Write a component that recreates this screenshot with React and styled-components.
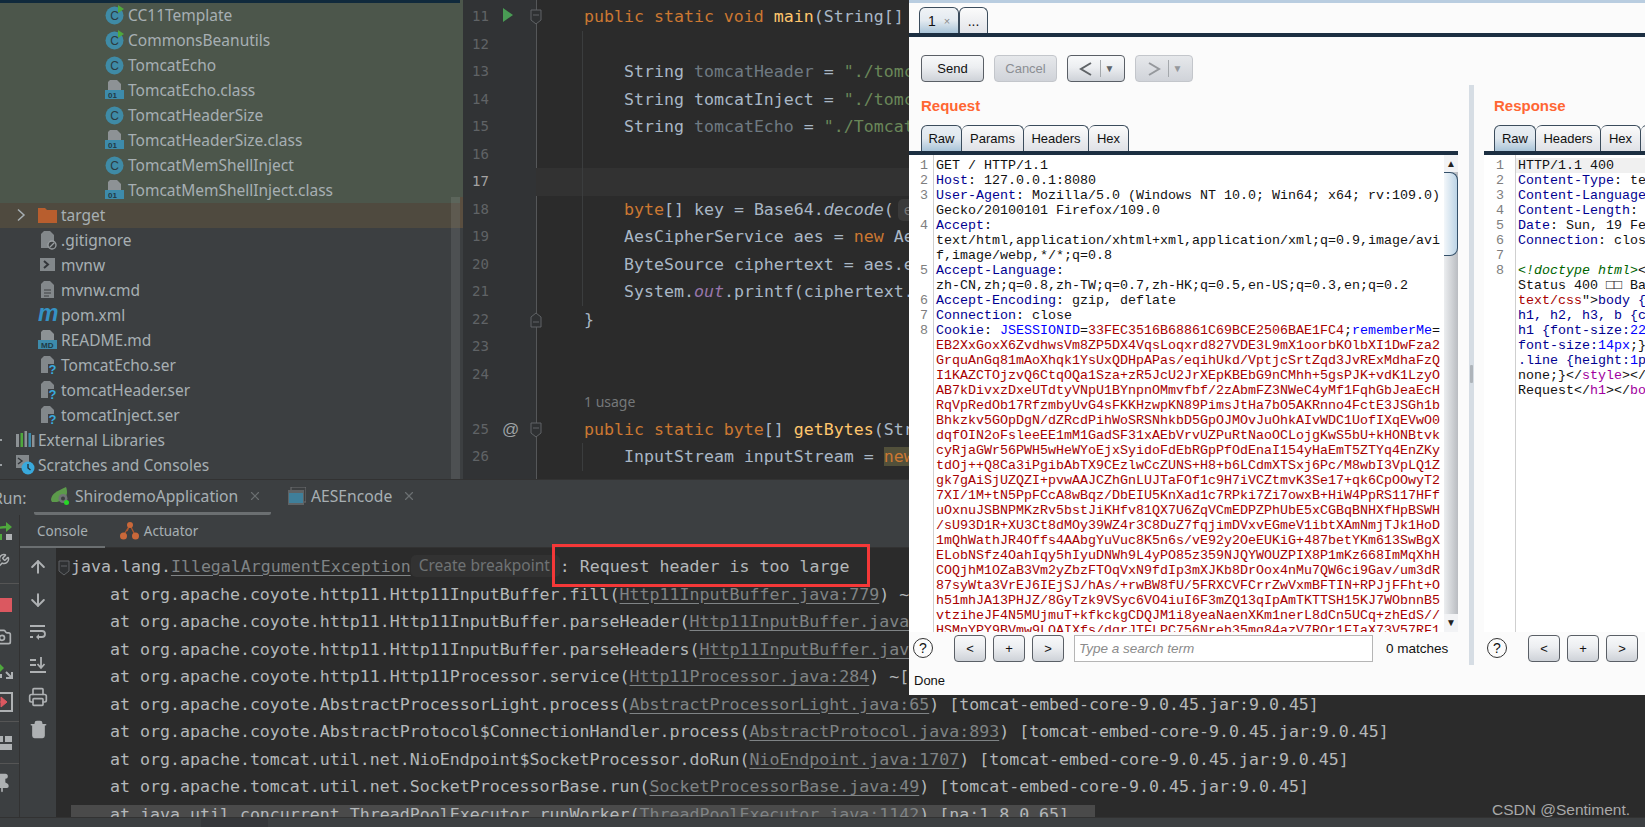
import React from 'react';
import styled, { createGlobalStyle } from 'styled-components';
import { ArrowUp, ArrowDown, Wrench, Camera, Pin, Printer, Trash2, X } from 'lucide-react';

const GlobalStyle = createGlobalStyle`
  html, body { margin: 0; padding: 0; background: #3c3f41; overflow: hidden; }
  * { box-sizing: border-box; }
`;

const Page = styled.div`
  position: relative;
  width: 1645px;
  height: 827px;
  overflow: hidden;
  display: flex;
  flex-direction: column;
  font-family: 'Noto Sans', sans-serif;
`;

const TopArea = styled.div`
  display: flex;
  height: 479px;
  flex: none;
`;

/* ---------- project tree ---------- */

const TreePanel = styled.div`
  position: relative;
  width: 460px;
  flex: none;
  background: #3c3f41;
  border-top: 3px solid #10293c;
  overflow: hidden;
`;

const TreeRow = styled.div`
  display: flex;
  align-items: center;
  height: 25px;
  padding-left: ${(p) => p.$pad}px;
  padding-bottom: 2px;
  background: ${(p) => (p.$tone === 'green' ? '#4c564b' : p.$tone === 'orange' ? '#4f4a3f' : 'transparent')};
  color: #a7afb3;
  font-size: 15.5px;
  white-space: nowrap;
`;

const IconBox = styled.span`
  display: inline-flex;
  width: 20px;
  height: 20px;
  flex: none;
  margin-right: 3px;
`;

const Chevron = styled.span`
  display: inline-flex;
  width: ${(p) => p.$w}px;
  flex: none;
`;

const TreeDot = styled.span`
  width: 2px;
  height: 2px;
  background: #9a9fa2;
  margin-right: 13px;
`;

const TreeScroll = styled.div`
  position: absolute;
  left: 451px;
  top: 194px;
  bottom: 0;
  width: 9px;
  background: rgba(255, 255, 255, 0.09);
`;

const Stripe = styled.div`
  width: 3px;
  flex: none;
  background: linear-gradient(#4c564b 0 197px, #5a4e3f 197px 228px, #3c3f41 228px);
`;

/* ---------- code editor ---------- */

const Editor = styled.div`
  flex: 1;
  min-width: 0;
  padding-top: 3px;
  overflow: hidden;
  background: linear-gradient(90deg, #313335 73px, #555759 73px 74px, #2b2b2b 74px);
`;

const CodeRow = styled.div`
  position: relative;
  display: flex;
  height: 27.5px;
  line-height: 27.5px;
  background: ${(p) => (p.$current ? 'linear-gradient(90deg, #313335 73px, #323232 73px)' : 'none')};
  font-family: 'DejaVu Sans Mono', monospace;
  font-size: 16.6px;
  color: #a9b7c6;
  white-space: pre;
`;

const LineNo = styled.span`
  position: relative;
  width: 74px;
  flex: none;
  padding-left: 9px;
  font-size: 14px;
  color: ${(p) => (p.$current ? '#a4a3a3' : '#606366')};
`;

const GutterMark = styled.span`
  position: absolute;
  left: 39px;
  top: 4px;
  display: inline-flex;
  color: #9fa3a6;
  font-family: 'Liberation Sans', sans-serif;
  font-size: 17px;
  line-height: 20px;
`;

const FoldMark = styled.svg`
  position: absolute;
  left: 67px;
  top: 6px;
`;

const CodeText = styled.span`
  position: relative;
  padding-left: ${(p) => 47 + p.$indent * 40}px;
  ${(p) =>
    p.$guide &&
    `&::before { content: ''; position: absolute; left: 45px; top: 0; bottom: 0; width: 1px; background: #3b3d3e; }`}
`;

const UsageText = styled.span`
  padding-left: 47px;
  font-family: 'Noto Sans', sans-serif;
  font-size: 14px;
  color: #75787a;
`;

const kindColor = {
  kw: '#cc7832',
  fn: '#ffc66d',
  dim: '#6f7a82',
  str: '#6a8759',
  field: '#9876aa',
};

const Tok = styled.span`
  color: ${(p) => kindColor[p.$k] || 'inherit'};
  font-style: ${(p) => (p.$i ? 'italic' : 'normal')};
  background: ${(p) => (p.$bg ? '#52503a' : 'none')};
`;

const Inlay = styled.span`
  display: inline-block;
  margin-left: 4px;
  padding: 0 6px;
  height: 22px;
  line-height: 22px;
  border-radius: 5px;
  background: #3a3a3a;
  color: #787878;
  font-size: 14px;
`;

/* ---------- run panel ---------- */

const RunPanel = styled.div`
  flex: 1;
  display: flex;
  flex-direction: column;
  min-height: 0;
  border-top: 1px solid #323232;
  background: #3c3f41;
`;

const RunTabs = styled.div`
  display: flex;
  align-items: center;
  height: 35px;
  flex: none;
  color: #a7afb3;
  font-size: 15.7px;
  white-space: nowrap;
`;

const RunLabel = styled.span`
  width: 34px;
  margin-left: -7px;
  margin-right: 7px;
  flex: none;
`;

const RunTab = styled.div`
  display: flex;
  align-items: center;
  height: 35px;
  padding-left: ${(p) => p.$pad}px;
  width: ${(p) => p.$w}px;
  flex: none;
  gap: 5px;
  border-bottom: 3px solid ${(p) => (p.$active ? '#6b6f71' : 'transparent')};
  border-radius: 0 0 2px 2px;
`;

const CloseX = styled(X)`
  margin-left: 5px;
  color: #6b6f71;
`;

const RunBody = styled.div`
  flex: 1;
  display: flex;
  min-height: 0;
`;

const SideStrip = styled.div`
  width: 20px;
  flex: none;
  border-right: 1px solid #323232;
  color: #aeb1b3;
  overflow: hidden;
`;

const StripSlot = styled.div`
  display: flex;
  align-items: center;
  height: ${(p) => p.$h}px;
  padding: ${(p) => p.$pt || 0}px 0 ${(p) => p.$pb || 0}px;
  margin-left: -8px;
  border-bottom: ${(p) => (p.$sep ? '1px solid #555' : 'none')};
`;

const ConsoleColumn = styled.div`
  flex: 1;
  min-width: 0;
  display: flex;
  flex-direction: column;
`;

const SubTabs = styled.div`
  display: flex;
  height: 33px;
  flex: none;
  border-bottom: 1px solid #323232;
  color: #a7afb3;
  font-size: 13.5px;
`;

const SubTab = styled.div`
  display: flex;
  align-items: center;
  gap: 5px;
  padding: 0 17px 0 ${(p) => p.$pl}px;
  height: 33px;
  border-bottom: 2px solid ${(p) => (p.$active ? '#6b6f71' : 'transparent')};
`;

const ConsoleArea = styled.div`
  flex: 1;
  display: flex;
  min-height: 0;
`;

const ToolColumn = styled.div`
  width: 36px;
  flex: none;
  padding-top: 3px;
  display: flex;
  flex-direction: column;
  align-items: center;
  color: #aeb1b3;
`;

const ToolSlot = styled.div`
  height: 32.5px;
  display: flex;
  align-items: center;
  justify-content: center;
`;

const ConsoleText = styled.div`
  position: relative;
  flex: 1;
  min-width: 0;
  padding-top: 5px;
  background: #2b2b2b;
  overflow: hidden;
  font-family: 'DejaVu Sans Mono', monospace;
  font-size: 16.6px;
  color: #b4b8ba;
  white-space: pre;
`;

const ConsoleLine = styled.div`
  height: 27.5px;
  line-height: 27.5px;
  margin-left: 15px;
  padding-left: ${(p) => (p.$first ? 0 : 39)}px;
  width: ${(p) => (p.$hl ? '1024px' : 'auto')};
  background: ${(p) => (p.$hl ? 'linear-gradient(transparent 4.5px, #4a4a4a 4.5px)' : 'none')};
`;

const FoldInline = styled.svg`
  position: absolute;
  left: 2px;
  top: 12px;
`;

const LinkText = styled.span`
  color: #7f8385;
  text-decoration: underline;
  text-underline-offset: 3px;
`;

const Hint = styled.span`
  display: inline-flex;
  align-items: center;
  vertical-align: top;
  width: 149px;
  height: 22px;
  margin-top: 2px;
  padding-left: 8px;
  border-radius: 5px;
  background: #323232;
  font-family: 'Noto Sans', sans-serif;
  font-size: 15.5px;
  color: #6f7274;
  white-space: nowrap;
`;

const BottomBar = styled.div`
  display: flex;
  height: 10px;
  flex: none;
  padding-left: 201px;
  background: #3c3f41;
  border-top: 1px solid #323232;
`;

const BottomTab = styled.div`
  width: 67px;
  background: #35373a;
`;

const RedBox = styled.div`
  position: absolute;
  left: 552px;
  top: 544px;
  width: 318px;
  height: 43px;
  border: 3px solid #f53838;
`;

const Watermark = styled.div`
  position: absolute;
  left: 1492px;
  top: 801px;
  font-family: 'Liberation Sans', sans-serif;
  font-size: 15.5px;
  color: #a8a8a8;
`;

/* ---------- burp window ---------- */

const BurpWindow = styled.div`
  position: absolute;
  left: 909px;
  top: 0;
  width: 736px;
  height: 695px;
  display: flex;
  flex-direction: column;
  overflow: hidden;
  background: #fbfbfb;
  border-top: 3px solid #b9cde0;
  font-family: 'Liberation Sans', sans-serif;
  color: #111;
`;

const MainTabs = styled.div`
  display: flex;
  height: 34px;
  flex: none;
  padding: 4px 0 0 10px;
  border-bottom: 4px solid #1c2f42;
`;

const MainTab = styled.div`
  display: flex;
  align-items: center;
  justify-content: center;
  gap: 8px;
  width: ${(p) => p.$w}px;
  height: 26px;
  border: 1px solid #3b4c5c;
  border-bottom: none;
  border-radius: 6px 6px 0 0;
  background: ${(p) =>
    p.$active ? 'linear-gradient(#f0f3f6, #e3eaf0 50%, #a9c4d8)' : 'linear-gradient(#fbfbfb, #e2e4e9)'};
  font-size: 14px;
`;

const TabClose = styled.span`
  color: #8a8a8a;
  font-size: 11px;
`;

const Toolbar = styled.div`
  display: flex;
  gap: 10px;
  flex: none;
  height: 27px;
  margin-top: 18px;
  padding-left: 12px;
`;

const PushButton = styled.button`
  display: inline-flex;
  align-items: center;
  justify-content: center;
  width: ${(p) => p.$w}px;
  height: 27px;
  padding: 0;
  border: 1px solid ${(p) => (p.$off ? '#c3c6cb' : '#5a5f66')};
  border-radius: 4px;
  background: ${(p) =>
    p.$off ? 'linear-gradient(#e6e8eb, #d0d3d9)' : 'linear-gradient(#f8f9fa, #eceef1 45%, #ced2d8)'};
  color: ${(p) => (p.$off ? '#8b8e93' : '#111')};
  font-family: 'Liberation Sans', sans-serif;
  font-size: 13px;
`;

const NavArrow = styled.svg`
  color: ${(p) => (p.$off ? '#95989c' : '#5f6367')};
`;

const NavDivider = styled.span`
  width: 1px;
  height: 17px;
  margin: 0 4px 0 6px;
  background: #a4a8ac;
`;

const NavCaret = styled.span`
  font-size: 10px;
  color: ${(p) => (p.$off ? '#95989c' : '#5f6367')};
`;

const Panes = styled.div`
  display: flex;
  height: 580px;
  flex: none;
  margin-top: 3px;
`;

const Pane = styled.div`
  display: flex;
  flex-direction: column;
  width: ${(p) => p.$w}px;
  flex: none;
  margin-left: ${(p) => p.$ml}px;
`;

const PaneTitle = styled.div`
  height: 40px;
  flex: none;
  padding: 12px 0 0 ${(p) => p.$pad}px;
  font-size: 15px;
  line-height: 18px;
  font-weight: bold;
  color: #ff6633;
`;

const PaneTabs = styled.div`
  display: flex;
  height: 30px;
  flex: none;
  padding-left: ${(p) => p.$pad}px;
  border-bottom: 4px solid #1c2f42;
  overflow: hidden;
`;

const PaneTab = styled.div`
  display: flex;
  align-items: center;
  justify-content: center;
  width: ${(p) => p.$w}px;
  flex: none;
  height: 26px;
  border: 1px solid #3b4c5c;
  border-bottom: none;
  border-left-width: ${(p) => (p.$first ? 1 : 0)}px;
  border-radius: 6px 6px 0 0;
  background: ${(p) =>
    p.$active ? 'linear-gradient(#e8eef3, #dfe7ee 50%, #a9c4d8)' : 'linear-gradient(#fbfbfb, #dfe1e6)'};
  font-size: 13px;
`;

const TextBox = styled.div`
  flex: 1;
  display: flex;
  min-height: 0;
  background: #fff;
  overflow: hidden;
`;

const NumberColumn = styled.div`
  width: ${(p) => p.$w}px;
  flex: none;
  padding: 3px ${(p) => p.$pr}px 0 0;
  border-right: 1px solid #cfcfcf;
  text-align: right;
  font-family: 'Liberation Mono', monospace;
  font-size: 13.33px;
  line-height: 15px;
  color: #7e7e7e;
`;

const HttpText = styled.div`
  flex: 1;
  min-width: 0;
  padding-top: 3px;
  overflow: hidden;
  font-family: 'Liberation Mono', monospace;
  font-size: 13.33px;
  line-height: 15px;
  color: #111;
  white-space: pre;
`;

const HttpLine = styled.div`
  height: 15px;
  padding-left: 2px;
  background: ${(p) => (p.$hl ? '#f0f0f0' : 'none')};
`;

const httpColor = {
  name: '#000090',
  cookie: '#0000ff',
  val: '#a80000',
  doc: '#006400',
  tag: '#a000a0',
  attr: '#000090',
};

const Http = styled.span`
  color: ${(p) => httpColor[p.$k] || 'inherit'};
  font-style: ${(p) => (p.$k === 'doc' ? 'italic' : 'normal')};
`;

const ScrollBar = styled.div`
  width: 14px;
  flex: none;
  display: flex;
  flex-direction: column;
  align-items: center;
  background: linear-gradient(90deg, #eceef0, #b9bcc1);
`;

const ScrollArrow = styled.div`
  height: ${(p) => p.$h}px;
  width: 14px;
  flex: none;
  text-align: center;
  font-size: 10px;
  line-height: ${(p) => p.$h}px;
  color: #222;
  background: #f2f3f5;
`;

const ScrollThumb = styled.div`
  width: 14px;
  height: 84px;
  flex: none;
  margin-bottom: auto;
  border: 1px solid #34506a;
  border-left: none;
  border-radius: 0 8px 8px 0;
  background: linear-gradient(90deg, #f3f7fa, #bcd4e6);
`;

const SearchBar = styled.div`
  display: flex;
  align-items: flex-start;
  height: 33px;
  flex: none;
  padding-top: 3px;
  background: #fbfbfb;
  color: #111;
  font-size: 13px;
`;

const HelpCircle = styled.div`
  display: flex;
  align-items: center;
  justify-content: center;
  width: 20px;
  height: 20px;
  margin: 3px 21px 0 ${(p) => p.$ml}px;
  border: 1.5px solid #333;
  border-radius: 50%;
  font-size: 14px;
`;

const SearchButtons = styled.div`
  display: flex;
  gap: 7px;
`;

const SearchInput = styled.div`
  width: 299px;
  height: 27px;
  margin-left: 10px;
  padding-left: 4px;
  border: 1px solid #b5b5b5;
  background: #fff;
  line-height: 25px;
  font-size: 13.5px;
  font-style: italic;
  color: #8b8b8b;
`;

const Matches = styled.div`
  margin-left: 13px;
  line-height: 27px;
  font-size: 13.5px;
`;

const Splitter = styled.div`
  position: relative;
  width: 5px;
  flex: none;
  margin-left: 11px;
  background: #d6dde4;
  &::after {
    content: '';
    position: absolute;
    left: 1px;
    top: 280px;
    width: 3px;
    height: 18px;
    background: #aeb4ba;
    border-radius: 1px;
  }
`;

const StatusLine = styled.div`
  flex: 1;
  padding: 8px 0 0 5px;
  font-size: 13px;
  color: #111;
`;

/* ---------- icons ---------- */

const fileShape = 'M5 0h7l4 4v6H3V2z';

const ClassIcon = ({ run }) => (
  <svg width="20" height="20" viewBox="0 0 20 20">
    <circle cx="9.5" cy="10.5" r="9" fill="#3f8ba6" />
    <text x="9.5" y="15" textAnchor="middle" fontSize="12" fontFamily="Liberation Sans" fill="#2c3a40">
      C
    </text>
    {run && <path d="M13 0l6 4-6 4z" fill="#4fa83d" />}
  </svg>
);

const BandFileIcon = ({ label }) => (
  <svg width="20" height="20" viewBox="0 0 20 20">
    <path d={fileShape} fill="#8d9295" />
    <rect x="0" y="10" width="19" height="9" fill="#3d8bab" />
    <text x="3" y="18" fontSize="8" fontWeight="bold" fontFamily="Liberation Sans" fill="#1f3a46">
      {label}
    </text>
  </svg>
);

const GrayFile = () => <path d="M6 1h6l4 4v13H3V4z" fill="#83888b" />;

const GitIgnoreIcon = () => (
  <svg width="20" height="20" viewBox="0 0 20 20">
    <GrayFile />
    <circle cx="14" cy="15" r="4" fill="#3c3f41" stroke="#9a9fa2" strokeWidth="1.3" />
    <path d="M11.5 17.5l5-5" stroke="#9a9fa2" strokeWidth="1.3" />
  </svg>
);

const ShellIcon = () => (
  <svg width="20" height="20" viewBox="0 0 20 20">
    <rect x="2" y="3" width="15" height="13" fill="#83888b" />
    <path d="M6 6l4 3.5L6 13" fill="none" stroke="#33363a" strokeWidth="2" />
  </svg>
);

const TextFileIcon = () => (
  <svg width="20" height="20" viewBox="0 0 20 20">
    <GrayFile />
    <path d="M6 10h7M6 13h7M6 16h5" stroke="#3c3f41" strokeWidth="1" />
  </svg>
);

const MavenIcon = () => (
  <svg width="20" height="20" viewBox="0 0 20 20">
    <text x="0" y="16" fontSize="23" fontWeight="bold" fontStyle="italic" fontFamily="Liberation Sans" fill="#3592c4">
      m
    </text>
  </svg>
);

const UnknownIcon = () => (
  <svg width="20" height="20" viewBox="0 0 20 20">
    <GrayFile />
    <path d="M10 9h8v11h-8z" fill="#3c3f41" />
    <text x="14.5" y="19" textAnchor="middle" fontSize="13" fontWeight="bold" fontFamily="Liberation Sans" fill="#39a9dc">
      ?
    </text>
  </svg>
);

const LibrariesIcon = () => (
  <svg width="20" height="20" viewBox="0 0 20 20">
    <rect x="1" y="4" width="3" height="13" fill="#8d9295" />
    <rect x="5.5" y="3" width="2.5" height="14" fill="#4fa83d" />
    <rect x="9.5" y="1" width="2.5" height="16" fill="#8d9295" />
    <rect x="13.5" y="3" width="2.5" height="14" fill="#3d8bab" />
    <rect x="17" y="5" width="2.5" height="12" fill="#8d9295" />
  </svg>
);

const ScratchIcon = () => (
  <svg width="20" height="20" viewBox="0 0 20 20">
    <rect x="1" y="0" width="13" height="13" fill="#83888b" />
    <path d="M3 3l4 3-4 3" fill="none" stroke="#33363a" strokeWidth="1.4" />
    <circle cx="13" cy="13" r="6.5" fill="#39a9dc" />
    <path d="M13 9v4l2.5 2" fill="none" stroke="#24323a" strokeWidth="1.4" />
  </svg>
);

const FolderIcon = () => (
  <svg width="20" height="20" viewBox="0 0 20 20">
    <path d="M0 3h7l2 2h10v13H0z" fill="#b85e2e" />
  </svg>
);

const ChevronIcon = () => (
  <svg width="12" height="14" viewBox="0 0 12 14">
    <path d="M3 1.5L9 7l-6 5.5" fill="none" stroke="#a7afb3" strokeWidth="1.5" />
  </svg>
);

const SpringIcon = () => (
  <svg width="20" height="20" viewBox="0 0 20 20">
    <path d="M1 14C1 8 7 5 16 1c2 5 1 10-3 13l-6 2H2z" fill="#5c9a4b" />
    <circle cx="13" cy="12.500" r="4.500" fill="#6f7375" />
    <circle cx="13" cy="12.500" r="2" fill="#3c3f41" />
    <circle cx="16.500" cy="16.500" r="2.500" fill="#27d627" />
  </svg>
);

const WindowIcon = () => (
  <svg width="18" height="18" viewBox="0 0 18 18">
    <rect x="3" y="0" width="15" height="15" fill="none" stroke="#6e7173" />
    <rect x="0" y="3" width="16" height="15" fill="#5f6365" />
    <rect x="1" y="6" width="14" height="10" fill="#3f7f9a" />
  </svg>
);

const ActuatorIcon = () => (
  <svg width="19" height="19" viewBox="0 0 19 19">
    <path d="M3 15l7-11 5.500 11M10 4l-3 6" fill="none" stroke="#b0562c" strokeWidth="1.3" />
    <circle cx="10" cy="4" r="3" fill="#c9683a" />
    <circle cx="3.500" cy="15" r="3.500" fill="#c9683a" />
    <circle cx="15.500" cy="15" r="3.500" fill="#c9683a" />
  </svg>
);

const RerunIcon = () => (
  <svg width="24" height="20" viewBox="0 0 24 20">
    <path d="M3 8c3-3 8-3 12-3" fill="none" stroke="#4fa83d" strokeWidth="2.400" />
    <path d="M14 0l6 5-6 5z" fill="#4fa83d" />
    <rect x="14" y="12" width="6" height="6" fill="#aeb1b3" />
    <rect x="4" y="12" width="6" height="6" fill="#4fa83d" />
  </svg>
);

const StopIcon = () => (
  <svg width="24" height="16" viewBox="0 0 24 16">
    <rect x="4" y="1" width="16" height="14" fill="#db5860" />
  </svg>
);

const RestoreIcon = () => (
  <svg width="24" height="20" viewBox="0 0 24 20">
    <path d="M6 2l6 6-6 6z" fill="#4fa83d" />
    <path d="M14 12l6 6M20 12v6h-6" fill="none" stroke="#aeb1b3" strokeWidth="2" />
    <rect x="4" y="14" width="6" height="4" fill="#aeb1b3" />
  </svg>
);

const DumpIcon = () => (
  <svg width="24" height="20" viewBox="0 0 24 20">
    <rect x="5" y="1" width="15" height="18" fill="none" stroke="#aeb1b3" strokeWidth="2" />
    <path d="M5 10h5M9 5l6 5-6 5z" fill="#db5860" stroke="#db5860" />
  </svg>
);

const LayoutIcon = () => (
  <svg width="24" height="16" viewBox="0 0 24 16">
    <path d="M4 1h7v6H4zM13 1h7v6h-7zM4 9h16v6H4z" fill="#aeb1b3" />
  </svg>
);

const WrapIcon = () => (
  <svg width="18" height="18" viewBox="0 0 18 18">
    <path d="M1 3h15M1 8h12a3 3 0 010 6H8M1 14h3" fill="none" stroke="#aeb1b3" strokeWidth="1.800" />
    <path d="M10 11l-3 3 3 3z" fill="#aeb1b3" />
  </svg>
);

const ScrollEndIcon = () => (
  <svg width="18" height="18" viewBox="0 0 18 18">
    <path d="M1 4h6M1 9h6M1 16h16M12 1v11M8.500 8l3.500 4 3.500-4" fill="none" stroke="#aeb1b3" strokeWidth="1.800" />
  </svg>
);

const FoldShape = ({ up, ...rest }) => (
  <svg width="12" height="16" viewBox="0 0 12 16" {...rest}>
    <path d={up ? 'M1 15V5l5-4 5 4v10z' : 'M1 1h10v10l-5 4-5-4z'} fill="#2f3133" stroke="#606366" />
    <path d={up ? 'M3 10h6' : 'M3 6h6'} stroke="#606366" />
  </svg>
);

/* ---------- data ---------- */

const treeRows = [
  { pad: 105, tone: 'green', icon: <ClassIcon run />, text: 'CC11Template' },
  { pad: 105, tone: 'green', icon: <ClassIcon run />, text: 'CommonsBeanutils' },
  { pad: 105, tone: 'green', icon: <ClassIcon />, text: 'TomcatEcho' },
  { pad: 105, tone: 'green', icon: <BandFileIcon label="01" />, text: 'TomcatEcho.class' },
  { pad: 105, tone: 'green', icon: <ClassIcon />, text: 'TomcatHeaderSize' },
  { pad: 105, tone: 'green', icon: <BandFileIcon label="01" />, text: 'TomcatHeaderSize.class' },
  { pad: 105, tone: 'green', icon: <ClassIcon />, text: 'TomcatMemShellInject' },
  { pad: 105, tone: 'green', icon: <BandFileIcon label="01" />, text: 'TomcatMemShellInject.class' },
  { pad: 15, tone: 'orange', arrow: true, icon: <FolderIcon />, text: 'target' },
  { pad: 38, icon: <GitIgnoreIcon />, text: '.gitignore' },
  { pad: 38, icon: <ShellIcon />, text: 'mvnw' },
  { pad: 38, icon: <TextFileIcon />, text: 'mvnw.cmd' },
  { pad: 38, icon: <MavenIcon />, text: 'pom.xml' },
  { pad: 38, icon: <BandFileIcon label="MD" />, text: 'README.md' },
  { pad: 38, icon: <UnknownIcon />, text: 'TomcatEcho.ser' },
  { pad: 38, icon: <UnknownIcon />, text: 'tomcatHeader.ser' },
  { pad: 38, icon: <UnknownIcon />, text: 'tomcatInject.ser' },
  { pad: 0, dot: true, icon: <LibrariesIcon />, text: 'External Libraries' },
  { pad: 0, dot: true, icon: <ScratchIcon />, text: 'Scratches and Consoles' },
];

// code is kept to what shows left of the Burp window
const codeRows = [
  { no: 11, mark: 'run', fold: 'down', indent: 0, toks: [['public static void ', 'kw'], ['main', 'fn'], ['(String[] ']] },
  { no: 12, indent: 0, guide: true, toks: [] },
  { no: 13, indent: 1, guide: true, toks: [['String '], ['tomcatHeader', 'dim'], [' = '], ['"./tomca', 'str']] },
  { no: 14, indent: 1, guide: true, toks: [['String tomcatInject = '], ['"./tomca', 'str']] },
  { no: 15, indent: 1, guide: true, toks: [['String '], ['tomcatEcho', 'dim'], [' = '], ['"./Tomcat', 'str']] },
  { no: 16, indent: 0, guide: true, toks: [] },
  { no: 17, indent: 0, guide: true, current: true, toks: [] },
  { no: 18, indent: 1, guide: true, inlay: 'e', toks: [['byte', 'kw'], ['[] key = Base64.'], ['decode', null, true], ['(']] },
  { no: 19, indent: 1, guide: true, toks: [['AesCipherService aes = '], ['new ', 'kw'], ['Ae']] },
  { no: 20, indent: 1, guide: true, toks: [['ByteSource ciphertext = aes.e']] },
  { no: 21, indent: 1, guide: true, toks: [['System.'], ['out', 'field', true], ['.printf(ciphertext.']] },
  { no: 22, fold: 'up', indent: 0, toks: [['}']] },
  { no: 23, indent: 0, toks: [] },
  { no: 24, indent: 0, toks: [] },
  { usage: true },
  { no: 25, mark: 'at', fold: 'down', indent: 0, toks: [['public static byte', 'kw'], ['[] '], ['getBytes', 'fn'], ['(Str']] },
  { no: 26, indent: 1, guide: true, toks: [['InputStream inputStream = '], ['new', 'kw', false, true]] },
];

const embed = ' [tomcat-embed-core-9.0.45.jar:9.0.45]';

const consoleRows = [
  { pre: 'org.apache.coyote.http11.Http11InputBuffer.fill(', link: 'Http11InputBuffer.java:779', post: ') ~' },
  { pre: 'org.apache.coyote.http11.Http11InputBuffer.parseHeader(', link: 'Http11InputBuffer.java', post: '' },
  { pre: 'org.apache.coyote.http11.Http11InputBuffer.parseHeaders(', link: 'Http11InputBuffer.jav', post: '' },
  { pre: 'org.apache.coyote.http11.Http11Processor.service(', link: 'Http11Processor.java:284', post: ') ~[' },
  { pre: 'org.apache.coyote.AbstractProcessorLight.process(', link: 'AbstractProcessorLight.java:65', post: ')' + embed },
  { pre: 'org.apache.coyote.AbstractProtocol$ConnectionHandler.process(', link: 'AbstractProtocol.java:893', post: ')' + embed },
  { pre: 'org.apache.tomcat.util.net.NioEndpoint$SocketProcessor.doRun(', link: 'NioEndpoint.java:1707', post: ')' + embed },
  { pre: 'org.apache.tomcat.util.net.SocketProcessorBase.run(', link: 'SocketProcessorBase.java:49', post: ')' + embed },
  { pre: 'java.util.concurrent.ThreadPoolExecutor.runWorker(', link: 'ThreadPoolExecutor.java:1142', post: ') [na:1.8.0_65]', hl: true },
];

const cookieValue = [
  'EB2XxGoxX6ZvdhwsVm8ZP5DX4VqsLoqxrd827VDE3L9mX1oorbKOlbXI1DwFza2',
  'GrquAnGq81mAoXhqk1YsUxQDHpAPas/eqihUkd/VptjcSrtZqd3JvRExMdhaFzQ',
  'I1KAZCTOjzvQ6CtqOQa1Sza+zR5JcU2JrXEpKBEbG9nCMhh+5gsPJK+vdK1LzyO',
  'AB7kDivxzDxeUTdtyVNpU1BYnpnOMmvfbf/2zAbmFZ3NWeC4yMf1FqhGbJeaEcH',
  'RqVpRedOb17RfzmbyUvG4sFKKHzwpKN89PimsJtHa7bO5AKRnno4FctE3JSGh1b',
  'Bhkzkv5GOpDgN/dZRcdPihWoSRSNhkbD5GpOJMOvJuOhkAIvWDC1UofIXqEVwO0',
  'dqfOIN2oFsleeEE1mM1GadSF31xAEbVrvUZPuRtNaoOCLojgKwS5bU+kHONBtvk',
  'cyRjaGWr56PWH5wHeWYoEjxSyidoFdEbRGpPfOdEnaI154yHaEmT5ZTYq4EnZKy',
  'tdOj++Q8Ca3iPgibAbTX9CEzlwCcZUNS+H8+b6LCdmXTSxj6Pc/M8wbI3VpLQ1Z',
  'gk7gAiSjUZQZI+pvwAAJCZhGnLUJTaFOf1c9H7iVCZtmvK3Se17+qk6CpOOwyT2',
  '7XI/1M+tN5PpFCcA8wBqz/DbEIU5KnXad1c7RPki7Zi7owxB+HiW4PpRS117HFf',
  'uOxnuJSBNPMKzRv5bstJiKHfv81QX7U6ZqVCmEDPZPhUbE5xCGBqBNHXfHpBSWH',
  '/sU93D1R+XU3Ct8dMOy39WZ4r3C8DuZ7fqjimDVxvEGmeV1ibtXAmNmjTJk1HoD',
  '1mQhWathJR4Offs4AAbgYuVuc8K5n6s/vE92y2OeEUKiG+487betYKm613SwBgX',
  'ELobNSfz4OahIqy5hIyuDNWh9L4yPO85z359NJQYWOUZPIX8P1mKz668ImMqXhH',
  'COQjhM1OZaB3Vm2yZbzFTOqVxN9fdIp3mXJKb8DrOox4nMu7QW6ci9Gav/um3dR',
  '87syWta3VrEJ6IEjSJ/hAs/+rwBW8fU/5FRXCVFCrrZwVxmBFTIN+RPJjFFht+O',
  'h51mhJA13PHJZ/8GyTzk9VSyc6VO4iuI6F3mZQ13qIpAmTKTTSH15KJ7WObnnB5',
  'vtziheJF4N5MUjmuT+kfkckgCDQJM1i8yeaNaenXKm1nerL8dCn5UCq+zhEdS//',
  'HSMnYPY9BVmw9LOAIXfs/dqrJTFLPC756Nreh35mq84azV7ROr1FIaX73V57RF1',
];

const requestNumbers = ['1', '2', '3', '', '4', '', '', '5', '', '6', '7', '8'];

const responseNumbers = ['1', '2', '3', '4', '5', '6', '7', '8'];

const requestLines = [
  [['GET / HTTP/1.1']],
  [['Host', 'name'], [': 127.0.0.1:8080']],
  [['User-Agent', 'name'], [': Mozilla/5.0 (Windows NT 10.0; Win64; x64; rv:109.0)']],
  [['Gecko/20100101 Firefox/109.0']],
  [['Accept', 'name'], [':']],
  [['text/html,application/xhtml+xml,application/xml;q=0.9,image/avi']],
  [['f,image/webp,*/*;q=0.8']],
  [['Accept-Language', 'name'], [':']],
  [['zh-CN,zh;q=0.8,zh-TW;q=0.7,zh-HK;q=0.5,en-US;q=0.3,en;q=0.2']],
  [['Accept-Encoding', 'name'], [': gzip, deflate']],
  [['Connection', 'name'], [': close']],
  [['Cookie', 'name'], [': '], ['JSESSIONID', 'cookie'], ['='], ['33FEC3516B68861C69BCE2506BAE1FC4', 'val'], [';'], ['rememberMe', 'cookie'], ['=']],
  ...cookieValue.map((v) => [[v, 'val']]),
];

const responseLines = [
  [['HTTP/1.1 400']],
  [['Content-Type', 'name'], [': te']],
  [['Content-Language', 'name']],
  [['Content-Length', 'name'], [':']],
  [['Date', 'name'], [': Sun, 19 Fe']],
  [['Connection', 'name'], [': clos']],
  [],
  [['<!doctype html>', 'doc'], ['<']],
  [['Status 400 □□ Ba']],
  [['text/css', 'val'], ['">'], ['body {', 'attr']],
  [['h1, h2, h3, b {c', 'attr']],
  [['h1 {font-size:', 'attr'], ['22', 'cookie']],
  [['font-size:', 'attr'], ['14px', 'cookie'], [';}']],
  [['.line {height:', 'attr'], ['1', 'cookie'], ['p', 'attr']],
  [['none;}</'], ['style', 'tag'], ['></']],
  [['Request</'], ['h1', 'tag'], ['></'], ['bo', 'tag']],
];

const HttpLines = ({ lines, highlightFirst }) =>
  lines.map((parts, i) => (
    <HttpLine key={i} $hl={highlightFirst && i === 0}>
      {parts.map(([t, k], j) => (
        <Http key={j} $k={k}>
          {t}
        </Http>
      ))}
    </HttpLine>
  ));

const SearchControls = ({ ml }) => (
  <>
    <HelpCircle $ml={ml}>?</HelpCircle>
    <SearchButtons>
      <PushButton $w={32}>&lt;</PushButton>
      <PushButton $w={32}>+</PushButton>
      <PushButton $w={32}>&gt;</PushButton>
    </SearchButtons>
  </>
);

const App = () => (
  <Page>
    <GlobalStyle />
    <TopArea>
      <TreePanel>
        {treeRows.map((r) => (
          <TreeRow key={r.text} $pad={r.pad} $tone={r.tone}>
            {r.arrow && (
              <Chevron $w={23}>
                <ChevronIcon />
              </Chevron>
            )}
            {r.dot && <TreeDot />}
            <IconBox>{r.icon}</IconBox>
            {r.text}
          </TreeRow>
        ))}
        <TreeScroll />
      </TreePanel>
      <Stripe />
      <Editor>
        {codeRows.map((r, i) =>
          r.usage ? (
            <CodeRow key={i}>
              <LineNo />
              <UsageText>1 usage</UsageText>
            </CodeRow>
          ) : (
            <CodeRow key={i} $current={r.current}>
              <LineNo $current={r.current}>
                {r.no}
                {r.mark === 'run' && (
                  <GutterMark>
                    <svg width="12" height="16" viewBox="0 0 12 16">
                      <path d="M1 1l10 7-10 7z" fill="#499c54" />
                    </svg>
                  </GutterMark>
                )}
                {r.mark === 'at' && <GutterMark>@</GutterMark>}
                {r.fold && <FoldMark as={FoldShape} up={r.fold === 'up'} />}
              </LineNo>
              <CodeText $indent={r.indent} $guide={r.guide}>
                {r.toks.map(([t, k, italic, bg], j) => (
                  <Tok key={j} $k={k} $i={italic} $bg={bg}>
                    {t}
                  </Tok>
                ))}
                {r.inlay && <Inlay>{r.inlay}</Inlay>}
              </CodeText>
            </CodeRow>
          ),
        )}
      </Editor>
    </TopArea>

    <RunPanel>
      <RunTabs>
        <RunLabel>Run:</RunLabel>
        <RunTab $active $w={237} $pad={16}>
          <SpringIcon />
          ShirodemoApplication
          <CloseX size={14} />
        </RunTab>
        <RunTab $w={160} $pad={17}>
          <WindowIcon />
          AESEncode
          <CloseX size={14} />
        </RunTab>
      </RunTabs>
      <RunBody>
        <SideStrip>
          <StripSlot $h={34}><RerunIcon /></StripSlot>
          <StripSlot $h={35} $pb={9} $sep><Wrench size={18} /></StripSlot>
          <StripSlot $h={37} $pt={5}><StopIcon /></StripSlot>
          <StripSlot $h={32}><Camera size={20} /></StripSlot>
          <StripSlot $h={34}><RestoreIcon /></StripSlot>
          <StripSlot $h={35} $pb={5} $sep><DumpIcon /></StripSlot>
          <StripSlot $h={42} $sep><LayoutIcon /></StripSlot>
          <StripSlot $h={38}><Pin size={20} fill="#aeb1b3" /></StripSlot>
        </SideStrip>
        <ConsoleColumn>
          <SubTabs>
            <SubTab $active $pl={17}>Console</SubTab>
            <SubTab $pl={15}>
              <ActuatorIcon />
              Actuator
            </SubTab>
          </SubTabs>
          <ConsoleArea>
            <ToolColumn>
              <ToolSlot><ArrowUp size={20} strokeWidth={2.4} /></ToolSlot>
              <ToolSlot><ArrowDown size={20} strokeWidth={2.4} /></ToolSlot>
              <ToolSlot><WrapIcon /></ToolSlot>
              <ToolSlot><ScrollEndIcon /></ToolSlot>
              <ToolSlot><Printer size={20} /></ToolSlot>
              <ToolSlot><Trash2 size={19} fill="#aeb1b3" /></ToolSlot>
            </ToolColumn>
            <ConsoleText>
              <FoldInline as={FoldShape} />
              <ConsoleLine $first>
                java.lang.<LinkText>IllegalArgumentException</LinkText>
                <Hint>Create breakpoint</Hint>: Request header is too large
              </ConsoleLine>
              {consoleRows.map((r) => (
                <ConsoleLine key={r.pre} $hl={r.hl}>
                  at {r.pre}
                  <LinkText>{r.link}</LinkText>
                  {r.post}
                </ConsoleLine>
              ))}
            </ConsoleText>
          </ConsoleArea>
        </ConsoleColumn>
      </RunBody>
      <BottomBar>
        <BottomTab />
      </BottomBar>
    </RunPanel>

    <BurpWindow>
      <MainTabs>
        <MainTab $active $w={40}>
          1 <TabClose>×</TabClose>
        </MainTab>
        <MainTab $w={29}>...</MainTab>
      </MainTabs>
      <Toolbar>
        <PushButton $w={63}>Send</PushButton>
        <PushButton $w={63} $off>Cancel</PushButton>
        <PushButton $w={58}>
          <NavArrow width="16" height="16" viewBox="0 0 16 16">
            <path d="M13 2L3 8l10 6" fill="none" stroke="currentColor" strokeWidth="2" />
          </NavArrow>
          <NavDivider />
          <NavCaret>▼</NavCaret>
        </PushButton>
        <PushButton $w={58} $off>
          <NavArrow $off width="16" height="16" viewBox="0 0 16 16">
            <path d="M3 2l10 6-10 6" fill="none" stroke="currentColor" strokeWidth="2" />
          </NavArrow>
          <NavDivider />
          <NavCaret $off>▼</NavCaret>
        </PushButton>
      </Toolbar>
      <Panes>
        <Pane $w={549} $ml={0}>
          <PaneTitle $pad={12}>Request</PaneTitle>
          <PaneTabs $pad={12}>
            <PaneTab $active $first $w={41}>Raw</PaneTab>
            <PaneTab $w={62}>Params</PaneTab>
            <PaneTab $w={65}>Headers</PaneTab>
            <PaneTab $w={40}>Hex</PaneTab>
          </PaneTabs>
          <TextBox>
            <NumberColumn $w={25} $pr={5}>
              {requestNumbers.map((n, i) => (
                <div key={i}>{n || '\u00a0'}</div>
              ))}
            </NumberColumn>
            <HttpText>
              <HttpLines lines={requestLines} />
            </HttpText>
            <ScrollBar>
              <ScrollArrow $h={17}>▲</ScrollArrow>
              <ScrollThumb />
              <ScrollArrow $h={18}>▼</ScrollArrow>
            </ScrollBar>
          </TextBox>
          <SearchBar>
            <SearchControls ml={4} />
            <SearchInput>Type a search term</SearchInput>
            <Matches>0 matches</Matches>
          </SearchBar>
        </Pane>
        <Splitter />
        <Pane $w={161} $ml={10}>
          <PaneTitle $pad={10}>Response</PaneTitle>
          <PaneTabs $pad={10}>
            <PaneTab $active $first $w={42}>Raw</PaneTab>
            <PaneTab $w={65}>Headers</PaneTab>
            <PaneTab $w={40}>Hex</PaneTab>
            <PaneTab $w={20} />
          </PaneTabs>
          <TextBox>
            <NumberColumn $w={32} $pr={11}>
              {responseNumbers.map((n) => (
                <div key={n}>{n}</div>
              ))}
            </NumberColumn>
            <HttpText>
              <HttpLines lines={responseLines} highlightFirst />
            </HttpText>
          </TextBox>
          <SearchBar>
            <SearchControls ml={3} />
          </SearchBar>
        </Pane>
      </Panes>
      <StatusLine>Done</StatusLine>
    </BurpWindow>

    <RedBox />
    <Watermark>CSDN @Sentiment.</Watermark>
  </Page>
);

export default App;
